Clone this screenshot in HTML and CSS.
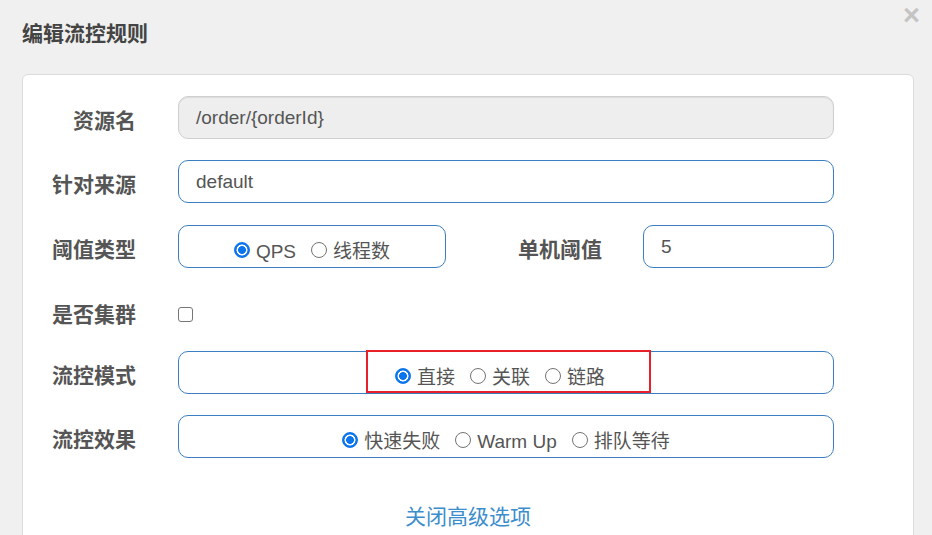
FILE: index.html
```html
<!DOCTYPE html>
<html lang="zh-CN">
<head>
<meta charset="utf-8">
<title>编辑流控规则</title>
<link rel="stylesheet" href="styles.css">
</head>
<body>
<div class="dialog">
  <div class="header">
    <div class="title">编辑流控规则</div>
    <div class="close">×</div>
  </div>
  <div class="card">
    <div class="row r1">
      <div class="label">资源名</div>
      <div class="control input disabled">/order/{orderId}</div>
    </div>
    <div class="row r2">
      <div class="label">针对来源</div>
      <div class="control input">default</div>
    </div>
    <div class="row r3">
      <div class="label">阈值类型</div>
      <div class="radiobox small">
        <label class="opt"><input type="radio" name="g1" checked><span>QPS</span></label>
        <label class="opt"><input type="radio" name="g1"><span>线程数</span></label>
      </div>
      <div class="label mid">单机阈值</div>
      <div class="input count">5</div>
    </div>
    <div class="row r4">
      <div class="label">是否集群</div>
      <input type="checkbox" class="check">
    </div>
    <div class="row r5">
      <div class="label">流控模式</div>
      <div class="control radiobox mode">
        <div class="mark"></div>
        <label class="opt"><input type="radio" name="g2" checked><span>直接</span></label>
        <label class="opt"><input type="radio" name="g2"><span>关联</span></label>
        <label class="opt"><input type="radio" name="g2"><span>链路</span></label>
      </div>
    </div>
    <div class="row r6">
      <div class="label">流控效果</div>
      <div class="control radiobox">
        <label class="opt"><input type="radio" name="g3" checked><span>快速失败</span></label>
        <label class="opt"><input type="radio" name="g3"><span>Warm Up</span></label>
        <label class="opt"><input type="radio" name="g3"><span>排队等待</span></label>
      </div>
    </div>
    <div class="more"><a href="#">关闭高级选项</a></div>
  </div>
</div>
</body>
</html>
```

FILE: styles.css
```css
html, body {
  margin: 0;
  padding: 0;
  height: 100%;
  overflow: hidden;
}
body {
  background: #f0f0f0;
  font-family: "Liberation Sans", Arial, "Noto Sans CJK SC", sans-serif;
  color: #555;
}
.dialog {
  padding: 17px 18px 0 22px;
}
.header {
  display: flex;
  justify-content: space-between;
  align-items: flex-start;
  height: 57px;
}
.title {
  font-family: "Noto Sans CJK SC", sans-serif;
  font-size: 21px;
  font-weight: 700;
  line-height: 30px;
  color: #444;
}
.close {
  margin-top: -17px;
  margin-right: -6px;
  font-family: "Liberation Sans", Arial, sans-serif;
  font-size: 29px;
  font-weight: 700;
  line-height: 30px;
  color: #c4c4c4;
}
.card {
  background: #fff;
  border: 1px solid #dcdcdc;
  border-radius: 6px;
  padding-top: 21px;
  height: 480px;
  box-sizing: border-box;
}
.row {
  display: flex;
  align-items: center;
  height: 43px;
}
.r1 { margin-bottom: 21px; }
.r2 { margin-bottom: 22px; }
.r3 { margin-bottom: 25px; }
.r4 { margin-bottom: 15px; }
.r5 { margin-bottom: 21px; }
.label {
  width: 113px;
  margin-right: 42px;
  text-align: right;
  font-family: "Noto Sans CJK SC", sans-serif;
  font-size: 21px;
  font-weight: 700;
  color: #555;
  padding-top: 3px;
  line-height: 30px;
}
.r4 .label {
  padding-top: 0;
  margin-top: -4px;
}
.label.mid {
  width: 156px;
  margin-right: 41px;
}
.control {
  width: 656px;
}
.input {
  box-sizing: border-box;
  height: 43px;
  border: 1px solid #3c7fc0;
  border-radius: 10px;
  padding: 0 17px;
  display: flex;
  align-items: center;
  font-size: 19px;
  color: #555;
}
.input.disabled {
  background: #eeeeee;
  border-color: #cfcfcf;
  box-shadow: inset 0 1px 1px rgba(0, 0, 0, 0.08);
}
.input.count {
  width: 191px;
}
.radiobox {
  position: relative;
  box-sizing: border-box;
  height: 43px;
  border: 1px solid #3c7fc0;
  border-radius: 10px;
  display: flex;
  align-items: center;
  justify-content: center;
  gap: 15px;
  padding-top: 10px;
}
.radiobox.small {
  width: 268px;
}
.radiobox.mode {
  padding-right: 12px;
}
.opt {
  display: flex;
  align-items: center;
  font-family: "Liberation Sans", Arial, "Noto Sans CJK SC", sans-serif;
  font-size: 19px;
  color: #555;
}
.opt input {
  appearance: none;
  -webkit-appearance: none;
  box-sizing: border-box;
  flex: 0 0 16px;
  width: 16px;
  height: 16px;
  min-width: 16px;
  margin: -3px 6px 0 0;
  border: 1.5px solid #737373;
  border-radius: 50%;
  background: #fff;
}
.opt input:checked {
  border-color: #0b75ee;
  background: radial-gradient(circle, #0b75ee 0 3.6px, #fff 4.2px 5.2px, #0b75ee 5.8px);
}
.opt span {
  line-height: 26px;
}
.check {
  appearance: none;
  -webkit-appearance: none;
  box-sizing: border-box;
  flex: 0 0 15px;
  width: 15px;
  height: 15px;
  margin: 0;
  border: 1.5px solid #767676;
  border-radius: 3px;
  background: #fff;
}
.mark {
  position: absolute;
  left: 187px;
  top: -2px;
  width: 285px;
  height: 43px;
  box-sizing: border-box;
  border: 2px solid #e8202a;
}
.more {
  text-align: center;
  margin-top: 42px;
  font-family: "Noto Sans CJK SC", sans-serif;
  font-size: 21px;
}
.more a {
  color: #3c8dcc;
  text-decoration: none;
}
```
